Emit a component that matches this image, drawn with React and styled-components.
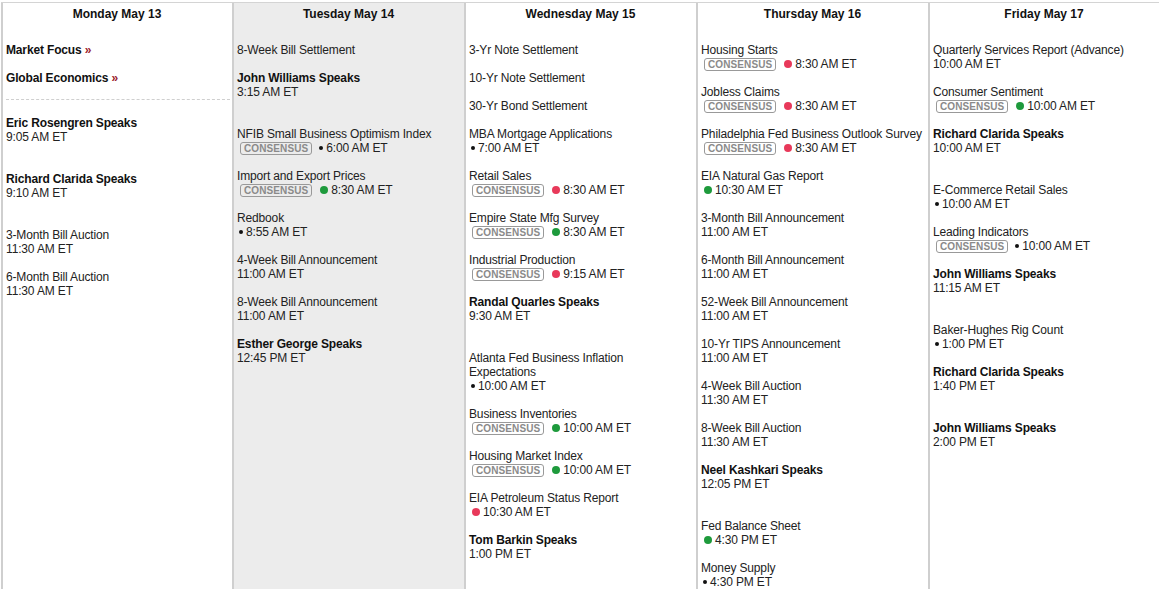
import React from "react";
import styled, { createGlobalStyle } from "styled-components";

const Global = createGlobalStyle`
  html, body { margin: 0; padding: 0; background: #fff; }
  body { font-family: "Liberation Sans", Arial, sans-serif; color: #222; overflow: hidden; }
`;

const Wrap = styled.div`
  width: 1159px;
  height: 589px;
  padding: 2px 0 0 1px;
  box-sizing: border-box;
  overflow: hidden;
`;

const Grid = styled.div`
  display: grid;
  grid-template-columns: 231px 232px 232px 232px 1fr;
  border-top: 1px solid #d4d4d4;
  min-height: 600px;
`;

const Column = styled.div`
  background: ${(p) => (p.$shaded ? "#ececec" : "#fff")};
  border-left: 2px solid #cfcfcf;
  padding: 0 2px 0 1px;
  min-height: 600px;
  box-sizing: border-box;
`;

const Header = styled.div`
  font-size: 12px;
  font-weight: 700;
  line-height: 14px;
  text-align: center;
  color: #111;
  padding: 4px 0 22px;
`;

const Item = styled.div`
  font-size: 12px;
  line-height: 14px;
  letter-spacing: -0.15px;
  margin-bottom: ${(p) => (p.$speaker ? 28 : 14)}px;
  padding: 0 3px 0 2px;
`;

const Title = styled.div`
  font-weight: ${(p) => (p.$bold ? 700 : 400)};
  color: ${(p) => (p.$bold ? "#111" : "#222")};
`;

const Arrow = styled.span`
  color: #9b1b2c;
  font-weight: 700;
`;

const Separator = styled.div`
  border-top: 1px dashed #cfcfcf;
  margin: 0 0 16px 2px;
`;

const TimeLine = styled.div`
  display: flex;
  align-items: center;
  white-space: nowrap;
`;

const Badge = styled.span`
  display: inline-block;
  font-size: 10px;
  font-weight: 700;
  letter-spacing: 0.1px;
  line-height: 10px;
  color: #8a8a8a;
  border: 1px solid #999;
  border-radius: 3px;
  padding: 1px 3px 0;
  margin: 0 5px 0 3px;
`;

const Dot = styled.span`
  display: inline-block;
  flex: none;
  border-radius: 50%;
  width: ${(p) => (p.$c === "black" ? 4 : 8)}px;
  height: ${(p) => (p.$c === "black" ? 4 : 8)}px;
  margin: 0 3px 0 ${(p) => (p.$c === "black" ? 2 : 3)}px;
  background: ${(p) =>
    p.$c === "red" ? "#e8395a" : p.$c === "green" ? "#1e9a3c" : "#111"};
`;

const days = [
  {
    name: "Monday May 13",
    links: ["Market Focus", "Global Economics"],
    items: [
      { t: "Eric Rosengren Speaks", s: true, time: "9:05 AM ET" },
      { t: "Richard Clarida Speaks", s: true, time: "9:10 AM ET" },
      { t: "3-Month Bill Auction", time: "11:30 AM ET" },
      { t: "6-Month Bill Auction", time: "11:30 AM ET" },
    ],
  },
  {
    name: "Tuesday May 14",
    shaded: true,
    items: [
      { t: "8-Week Bill Settlement" },
      { t: "John Williams Speaks", s: true, time: "3:15 AM ET" },
      { t: "NFIB Small Business Optimism Index", c: true, d: "black", time: "6:00 AM ET" },
      { t: "Import and Export Prices", c: true, d: "green", time: "8:30 AM ET" },
      { t: "Redbook", d: "black", time: "8:55 AM ET" },
      { t: "4-Week Bill Announcement", time: "11:00 AM ET" },
      { t: "8-Week Bill Announcement", time: "11:00 AM ET" },
      { t: "Esther George Speaks", s: true, time: "12:45 PM ET" },
    ],
  },
  {
    name: "Wednesday May 15",
    items: [
      { t: "3-Yr Note Settlement" },
      { t: "10-Yr Note Settlement" },
      { t: "30-Yr Bond Settlement" },
      { t: "MBA Mortgage Applications", d: "black", time: "7:00 AM ET" },
      { t: "Retail Sales", c: true, d: "red", time: "8:30 AM ET" },
      { t: "Empire State Mfg Survey", c: true, d: "green", time: "8:30 AM ET" },
      { t: "Industrial Production", c: true, d: "red", time: "9:15 AM ET" },
      { t: "Randal Quarles Speaks", s: true, time: "9:30 AM ET" },
      { t: "Atlanta Fed Business Inflation Expectations", d: "black", time: "10:00 AM ET" },
      { t: "Business Inventories", c: true, d: "green", time: "10:00 AM ET" },
      { t: "Housing Market Index", c: true, d: "green", time: "10:00 AM ET" },
      { t: "EIA Petroleum Status Report", d: "red", time: "10:30 AM ET" },
      { t: "Tom Barkin Speaks", s: true, time: "1:00 PM ET" },
    ],
  },
  {
    name: "Thursday May 16",
    items: [
      { t: "Housing Starts", c: true, d: "red", time: "8:30 AM ET" },
      { t: "Jobless Claims", c: true, d: "red", time: "8:30 AM ET" },
      { t: "Philadelphia Fed Business Outlook Survey", c: true, d: "red", time: "8:30 AM ET" },
      { t: "EIA Natural Gas Report", d: "green", time: "10:30 AM ET" },
      { t: "3-Month Bill Announcement", time: "11:00 AM ET" },
      { t: "6-Month Bill Announcement", time: "11:00 AM ET" },
      { t: "52-Week Bill Announcement", time: "11:00 AM ET" },
      { t: "10-Yr TIPS Announcement", time: "11:00 AM ET" },
      { t: "4-Week Bill Auction", time: "11:30 AM ET" },
      { t: "8-Week Bill Auction", time: "11:30 AM ET" },
      { t: "Neel Kashkari Speaks", s: true, time: "12:05 PM ET" },
      { t: "Fed Balance Sheet", d: "green", time: "4:30 PM ET" },
      { t: "Money Supply", d: "black", time: "4:30 PM ET" },
    ],
  },
  {
    name: "Friday May 17",
    items: [
      { t: "Quarterly Services Report (Advance)", time: "10:00 AM ET" },
      { t: "Consumer Sentiment", c: true, d: "green", time: "10:00 AM ET" },
      { t: "Richard Clarida Speaks", s: true, time: "10:00 AM ET" },
      { t: "E-Commerce Retail Sales", d: "black", time: "10:00 AM ET" },
      { t: "Leading Indicators", c: true, d: "black", time: "10:00 AM ET" },
      { t: "John Williams Speaks", s: true, time: "11:15 AM ET" },
      { t: "Baker-Hughes Rig Count", d: "black", time: "1:00 PM ET" },
      { t: "Richard Clarida Speaks", s: true, time: "1:40 PM ET" },
      { t: "John Williams Speaks", s: true, time: "2:00 PM ET" },
    ],
  },
];

function Event({ ev }) {
  return (
    <Item $speaker={ev.s}>
      <Title $bold={ev.s}>{ev.t}</Title>
      {ev.time && (
        <TimeLine>
          {ev.c && <Badge>CONSENSUS</Badge>}
          {ev.d && <Dot $c={ev.d} />}
          <span>{ev.time}</span>
        </TimeLine>
      )}
    </Item>
  );
}

export default function App() {
  return (
    <>
      <Global />
      <Wrap>
        <Grid>
          {days.map((day) => (
            <Column key={day.name} $shaded={day.shaded}>
              <Header>{day.name}</Header>
              {day.links && (
                <>
                  {day.links.map((l) => (
                    <Item key={l}>
                      <Title $bold>
                        {l} <Arrow>»</Arrow>
                      </Title>
                    </Item>
                  ))}
                  <Separator />
                </>
              )}
              {day.items.map((ev, i) => (
                <Event key={i} ev={ev} />
              ))}
            </Column>
          ))}
        </Grid>
      </Wrap>
    </>
  );
}
